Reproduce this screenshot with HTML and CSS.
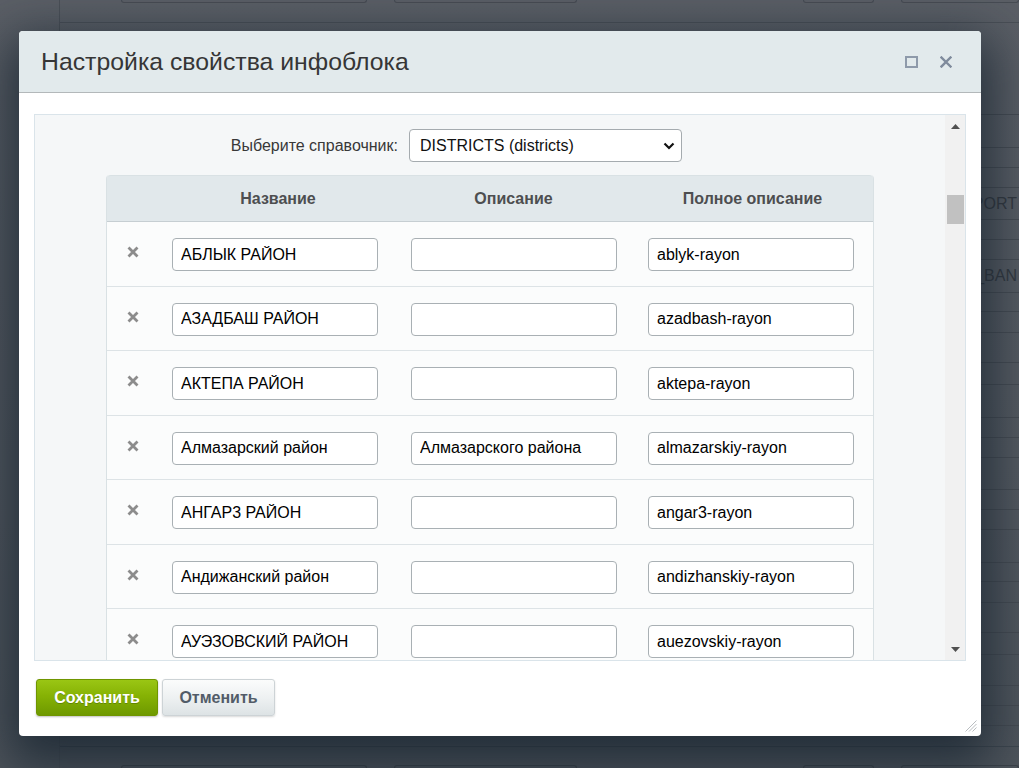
FILE: index.html
```html
<!DOCTYPE html>
<html lang="ru">
<head>
<meta charset="utf-8">
<title>Настройка свойства инфоблока</title>
<link rel="stylesheet" href="styles.css">
</head>
<body>
<div class="page">
  <aside class="side"></aside>
  <main class="main">
    <div class="toolbar">
      <span class="tb tb1"></span><span class="tb tb2"></span><span class="tb tb3"></span><span class="tb tb4"></span>
    </div>
    <div class="bgrows">
      <div class="bgrow" style="height:92px"></div>
      <div class="bgrow" style="height:33px"></div>
      <div class="bgrow" style="height:20px"></div>
      <div class="bgrow" style="height:20px"></div>
      <div class="bgrow" style="height:32px"><span class="bgtext">PORT</span></div>
      <div class="bgrow" style="height:20px"></div>
      <div class="bgrow" style="height:20px"></div>
      <div class="bgrow" style="height:33px"><span class="bgtext">_BAN</span></div>
      <div class="bgrow" style="height:19px"></div>
      <div class="bgrow" style="height:21px"></div>
      <div class="bgrow" style="height:30px"></div>
      <div class="bgrow" style="height:22px"></div>
      <div class="bgrow" style="height:33px"></div>
      <div class="bgrow" style="height:20px"></div>
      <div class="bgrow" style="height:20px"></div>
      <div class="bgrow" style="height:32px"></div>
      <div class="bgrow" style="height:20px"></div>
      <div class="bgrow" style="height:20px"></div>
      <div class="bgrow" style="height:33px"></div>
      <div class="bgrow" style="height:19px"></div>
      <div class="bgrow" style="height:21px"></div>
      <div class="bgrow" style="height:30px"></div>
      <div class="bgrow" style="height:22px"></div>
      <div class="bgrow" style="height:31px"></div>
      <div class="bgrow" style="height:20px"></div>
      <div class="bgrow" style="height:20px"></div>
      <div class="bgrow" style="height:32px"></div>
    </div>
    <div class="bottombar">
      <span class="bb bb1"></span><span class="bb bb2"></span><span class="bb bb3"></span><span class="bb bb4"></span>
    </div>
  </main>
</div>

<div class="dialog">
  <header class="dlg-head">
    <h1 class="dlg-title">Настройка свойства инфоблока</h1>
    <div class="dlg-tools">
      <svg class="tool" width="13" height="12" viewBox="0 0 13 12"><rect x="1" y="1" width="11" height="10" fill="none" stroke="#8e9aaa" stroke-width="2"/></svg>
      <svg class="tool" width="12" height="12" viewBox="0 0 12 12"><path d="M1.5 1.5 L10.5 10.5 M10.5 1.5 L1.5 10.5" stroke="#7f8b9c" stroke-width="2.4" stroke-linecap="square"/></svg>
    </div>
  </header>

  <div class="dlg-body">
    <div class="box">
      <div class="box-content">
        <div class="pick-row">
          <label class="pick-label">Выберите справочник:</label>
          <div class="select">
            <span>DISTRICTS (districts)</span>
            <svg width="12" height="8" viewBox="0 0 12 8"><path d="M1.5 1.5 L6 6 L10.5 1.5" fill="none" stroke="#111" stroke-width="2.2"/></svg>
          </div>
        </div>

        <div class="grid">
          <div class="ghead">
            <div class="hc"></div>
            <div class="hc">Название</div>
            <div class="hc">Описание</div>
            <div class="hc">Полное описание</div>
          </div>

          <div class="grow">
            <div class="c-del"><svg class="del" width="12" height="12" viewBox="0 0 12 12"><path d="M1.5 1.5 L10.5 10.5 M10.5 1.5 L1.5 10.5" stroke="#8c8c8c" stroke-width="2.8"/></svg></div>
            <div class="c c2"><input class="inp" value="АБЛЫК РАЙОН"></div>
            <div class="c c3"><input class="inp" value=""></div>
            <div class="c c4"><input class="inp" value="ablyk-rayon"></div>
          </div>
          <div class="grow">
            <div class="c-del"><svg class="del" width="12" height="12" viewBox="0 0 12 12"><path d="M1.5 1.5 L10.5 10.5 M10.5 1.5 L1.5 10.5" stroke="#8c8c8c" stroke-width="2.8"/></svg></div>
            <div class="c c2"><input class="inp" value="АЗАДБАШ РАЙОН"></div>
            <div class="c c3"><input class="inp" value=""></div>
            <div class="c c4"><input class="inp" value="azadbash-rayon"></div>
          </div>
          <div class="grow">
            <div class="c-del"><svg class="del" width="12" height="12" viewBox="0 0 12 12"><path d="M1.5 1.5 L10.5 10.5 M10.5 1.5 L1.5 10.5" stroke="#8c8c8c" stroke-width="2.8"/></svg></div>
            <div class="c c2"><input class="inp" value="АКТЕПА РАЙОН"></div>
            <div class="c c3"><input class="inp" value=""></div>
            <div class="c c4"><input class="inp" value="aktepa-rayon"></div>
          </div>
          <div class="grow">
            <div class="c-del"><svg class="del" width="12" height="12" viewBox="0 0 12 12"><path d="M1.5 1.5 L10.5 10.5 M10.5 1.5 L1.5 10.5" stroke="#8c8c8c" stroke-width="2.8"/></svg></div>
            <div class="c c2"><input class="inp" value="Алмазарский район"></div>
            <div class="c c3"><input class="inp" value="Алмазарского района"></div>
            <div class="c c4"><input class="inp" value="almazarskiy-rayon"></div>
          </div>
          <div class="grow">
            <div class="c-del"><svg class="del" width="12" height="12" viewBox="0 0 12 12"><path d="M1.5 1.5 L10.5 10.5 M10.5 1.5 L1.5 10.5" stroke="#8c8c8c" stroke-width="2.8"/></svg></div>
            <div class="c c2"><input class="inp" value="АНГАР3 РАЙОН"></div>
            <div class="c c3"><input class="inp" value=""></div>
            <div class="c c4"><input class="inp" value="angar3-rayon"></div>
          </div>
          <div class="grow">
            <div class="c-del"><svg class="del" width="12" height="12" viewBox="0 0 12 12"><path d="M1.5 1.5 L10.5 10.5 M10.5 1.5 L1.5 10.5" stroke="#8c8c8c" stroke-width="2.8"/></svg></div>
            <div class="c c2"><input class="inp" value="Андижанский район"></div>
            <div class="c c3"><input class="inp" value=""></div>
            <div class="c c4"><input class="inp" value="andizhanskiy-rayon"></div>
          </div>
          <div class="grow">
            <div class="c-del"><svg class="del" width="12" height="12" viewBox="0 0 12 12"><path d="M1.5 1.5 L10.5 10.5 M10.5 1.5 L1.5 10.5" stroke="#8c8c8c" stroke-width="2.8"/></svg></div>
            <div class="c c2"><input class="inp" value="АУЭЗОВСКИЙ РАЙОН"></div>
            <div class="c c3"><input class="inp" value=""></div>
            <div class="c c4"><input class="inp" value="auezovskiy-rayon"></div>
          </div>
          <div class="grow">
            <div class="c-del"><svg class="del" width="12" height="12" viewBox="0 0 12 12"><path d="M1.5 1.5 L10.5 10.5 M10.5 1.5 L1.5 10.5" stroke="#8c8c8c" stroke-width="2.8"/></svg></div>
            <div class="c c2"><input class="inp" value=""></div>
            <div class="c c3"><input class="inp" value=""></div>
            <div class="c c4"><input class="inp" value=""></div>
          </div>
        </div>
      </div>
      <div class="scrollbar">
        <svg class="arr" width="9" height="5" viewBox="0 0 9 5"><path d="M0 5 L4.5 0 L9 5 Z" fill="#505050"/></svg>
        <div class="thumb"></div>
        <div class="track-fill"></div>
        <svg class="arr" width="9" height="5" viewBox="0 0 9 5"><path d="M0 0 L4.5 5 L9 0 Z" fill="#505050"/></svg>
      </div>
    </div>

    <div class="dlg-foot">
      <button class="btn btn-save">Сохранить</button>
      <button class="btn btn-cancel">Отменить</button>
    </div>
  </div>

  <svg class="grip" width="14" height="14" viewBox="0 0 14 14"><path d="M13.5 2.5 L2.5 13.5 M13.5 6 L6 13.5 M13.5 9.5 L9.5 13.5" stroke="#b9bdc0" stroke-width="1"/></svg>
</div>
</body>
</html>
```

FILE: styles.css
```css
* { box-sizing: border-box; }

html, body {
  margin: 0;
  width: 1019px;
  height: 768px;
  overflow: hidden;
}

body {
  font-family: "Liberation Sans", Arial, sans-serif;
  background: linear-gradient(180deg, #5b5f66 0%, #555a61 60%, #4f555c 100%);
  position: relative;
}

/* ---------- dimmed background page ---------- */
.page {
  display: flex;
  height: 768px;
}

.side {
  width: 60px;
  flex: none;
  border-right: 1px solid #4b5057;
}

.main {
  flex: 1;
  display: flex;
  flex-direction: column;
  overflow: hidden;
}

.toolbar {
  height: 23px;
  flex: none;
  border-bottom: 1px solid #4a4f56;
  display: flex;
  align-items: flex-start;
}

.tb {
  display: block;
  height: 3px;
  border: 1px solid #474c53;
  border-top: none;
  border-radius: 0 0 5px 5px;
}
.tb1 { width: 251px; margin-left: 61px; }
.tb2 { width: 186px; margin-left: 27px; }
.tb3 { width: 73px; margin-left: 226px; }
.tb4 { width: 120px; margin-left: 27px; }

.bgrows {
  flex: 1;
  display: flex;
  flex-direction: column;
  overflow: hidden;
}

.bgrow {
  flex: none;
  border-bottom: 1px solid #474c53;
  display: flex;
  align-items: center;
  justify-content: flex-end;
}

.bgtext {
  font-size: 16px;
  color: #343940;
  margin-right: 2px;
}

.bottombar {
  height: 22px;
  flex: none;
  border-top: 1px solid #3f474f;
  display: flex;
  align-items: flex-end;
}

.bb {
  display: block;
  height: 3px;
  border: 1px solid #3d434a;
  border-bottom: none;
  border-radius: 5px 5px 0 0;
}
.bb1 { width: 251px; margin-left: 61px; }
.bb2 { width: 186px; margin-left: 27px; }
.bb3 { width: 73px; margin-left: 226px; }
.bb4 { width: 120px; margin-left: 27px; }

/* ---------- dialog ---------- */
.dialog {
  position: absolute;
  left: 19px;
  top: 31px;
  width: 962px;
  height: 705px;
  background: #fff;
  border-radius: 4px;
  box-shadow: 0 18px 50px 12px rgba(20, 34, 46, 0.75);
  display: flex;
  flex-direction: column;
}

.dlg-head {
  height: 62px;
  flex: none;
  background: #e2eaec;
  border-bottom: 1px solid #b3b8ba;
  border-radius: 4px 4px 0 0;
  display: flex;
  align-items: center;
  justify-content: space-between;
  padding: 0 29px 0 22px;
}

.dlg-title {
  margin: 0;
  font-weight: normal;
  font-size: 24.8px;
  color: #363636;
}

.dlg-tools {
  display: flex;
  align-items: center;
  gap: 22px;
  padding-top: 1px;
}

.tool { display: block; }

.dlg-body {
  flex: 1;
  padding: 21px 15px 0 15px;
  display: flex;
  flex-direction: column;
}

.box {
  height: 547px;
  flex: none;
  border: 1px solid #dae4ea;
  background: #f5f7f8;
  display: flex;
  overflow: hidden;
}

.box-content {
  flex: 1;
  overflow: hidden;
  padding-top: 14px;
}

.pick-row {
  display: flex;
  align-items: center;
}

.pick-label {
  width: 363px;
  text-align: right;
  font-size: 16px;
  color: #383838;
  margin-right: 11px;
}

.select {
  width: 273px;
  height: 33px;
  border: 1px solid #a5abaf;
  border-radius: 4px;
  background: #fff;
  display: flex;
  align-items: center;
  justify-content: space-between;
  padding: 0 6px 0 10px;
  font-size: 16px;
  color: #111;
}
.select svg { display: block; margin-top: 1px; }

/* ---------- grid table ---------- */
.grid {
  width: 768px;
  margin: 13px auto 0;
  border-left: 1px solid #d9e1e4;
  border-right: 1px solid #d9e1e4;
  border-radius: 4px 4px 0 0;
  background: #fbfcfc;
}

.ghead, .grow {
  display: grid;
  grid-template-columns: 54px 234px 237px 241px;
}

.ghead {
  height: 47px;
  background: #e1e8eb;
  border-bottom: 1px solid #c6ced2;
  border-top: 1px solid #d9e1e4;
  border-radius: 4px 4px 0 0;
}

.hc {
  display: flex;
  align-items: center;
  justify-content: center;
  font-size: 16px;
  font-weight: bold;
  color: #4d4e50;
}

.grow {
  height: 64.5px;
  border-bottom: 1px solid #dde3e6;
  align-items: center;
  padding-top: 2px;
}

.c-del {
  display: flex;
  justify-content: center;
  margin-top: -5px;
  padding-right: 2px;
}
.del { display: block; }

.c { display: flex; }
.c2 { padding-left: 11px; }
.c3 { padding-left: 16px; }
.c4 { padding-left: 16px; }

.inp {
  width: 206px;
  height: 33px;
  border: 1px solid #a9b0b4;
  border-radius: 4px;
  background: #fff;
  font-family: "Liberation Sans", Arial, sans-serif;
  font-size: 16px;
  color: #000;
  padding: 0 8px;
  margin: 0;
  outline: none;
}

/* ---------- fake scrollbar ---------- */
.scrollbar {
  width: 20px;
  flex: none;
  background: #f1f1f1;
  display: flex;
  flex-direction: column;
  align-items: center;
  padding: 9px 0 8px;
}
.arr { display: block; flex: none; }
.thumb {
  width: 17px;
  height: 29px;
  background: #c1c1c1;
  margin-top: 66px;
  flex: none;
}
.track-fill { flex: 1; }

/* ---------- footer ---------- */
.dlg-foot {
  display: flex;
  gap: 4px;
  padding: 18px 0 0 2px;
}

.btn {
  height: 37px;
  border-radius: 3px;
  font-family: "Liberation Sans", Arial, sans-serif;
  font-size: 16px;
  font-weight: bold;
  padding: 0;
  cursor: pointer;
}

.btn-save {
  width: 122px;
  color: #fff;
  border: 1px solid #6f9500;
  background: linear-gradient(180deg, #9ac614 0%, #86b204 45%, #6e9900 100%);
  text-shadow: 0 1px 0 rgba(70, 100, 0, 0.5);
  box-shadow: 0 1px 2px rgba(0, 0, 0, 0.25);
}

.btn-cancel {
  width: 113px;
  color: #525c68;
  border: 1px solid #cdd3d6;
  background: linear-gradient(180deg, #fbfcfc 0%, #eef1f2 50%, #dde3e5 100%);
  box-shadow: 0 1px 2px rgba(0, 0, 0, 0.15);
}

.grip {
  position: absolute;
  right: 4px;
  bottom: 4px;
  display: block;
}
```
